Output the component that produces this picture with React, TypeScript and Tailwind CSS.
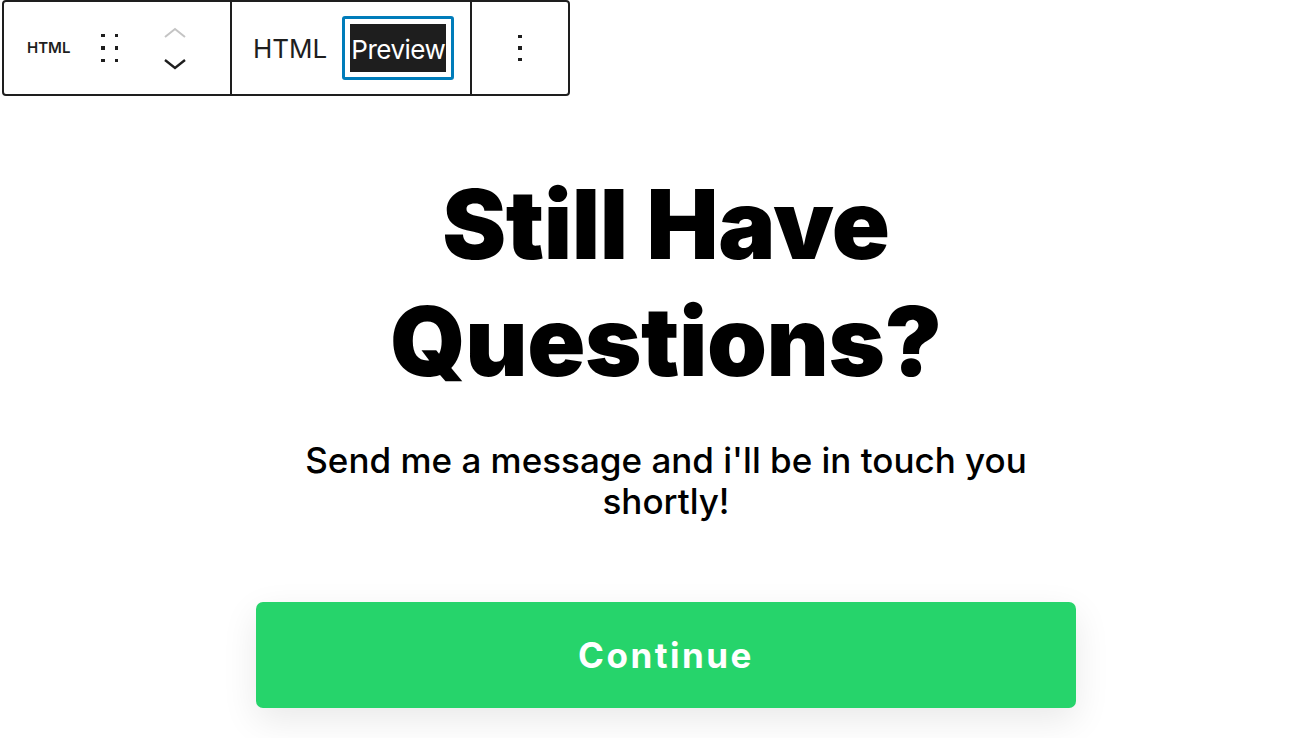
export default function App() {
  return (
    <div className="min-h-screen bg-white font-['Inter',sans-serif] text-black">
      <div className="pl-[2px]">
        <div className="flex h-[96px] w-[568px] rounded-[4px] border-2 border-[#1e1e1e] bg-white">
          <div className="flex w-[228px] items-center border-r-2 border-[#1e1e1e]">
            <span className="ml-[23px] text-[15px] font-semibold text-[#1e1e1e]">HTML</span>
            <div className="ml-[31px] grid grid-cols-2 gap-x-[10px] gap-y-[9px]">
              <span className="h-[3.5px] w-[3.5px] bg-[#1e1e1e]" />
              <span className="h-[3.5px] w-[3.5px] bg-[#1e1e1e]" />
              <span className="h-[3.5px] w-[3.5px] bg-[#1e1e1e]" />
              <span className="h-[3.5px] w-[3.5px] bg-[#1e1e1e]" />
              <span className="h-[3.5px] w-[3.5px] bg-[#1e1e1e]" />
              <span className="h-[3.5px] w-[3.5px] bg-[#1e1e1e]" />
            </div>
            <div className="ml-[45px] flex flex-col gap-[17px]">
              <svg width="24" height="14" viewBox="0 0 24 14" fill="none">
                <path d="M2 11 L12 3 L22 11" stroke="#c4c4c4" strokeWidth="2" />
              </svg>
              <svg width="24" height="14" viewBox="0 0 24 14" fill="none">
                <path d="M2 3 L12 11 L22 3" stroke="#1e1e1e" strokeWidth="2.4" />
              </svg>
            </div>
          </div>
          <div className="flex w-[240px] items-center border-r-2 border-[#1e1e1e]">
            <span className="ml-[21px] text-[26px] text-[#1e1e1e]">HTML</span>
            <div className="ml-[15px] rounded-[3px] border-[3px] border-[#007cba] p-[5px]">
              <div className="flex h-[48px] w-[96px] items-center overflow-hidden bg-[#1e1e1e]">
                <span className="ml-[1px] mt-[2px] whitespace-nowrap text-[26px] tracking-[-0.5px] text-white">Preview</span>
              </div>
            </div>
          </div>
          <div className="flex flex-1 items-center justify-center">
            <div className="flex flex-col gap-[8px]">
              <span className="h-[3.5px] w-[3.5px] bg-[#1e1e1e]" />
              <span className="h-[3.5px] w-[3.5px] bg-[#1e1e1e]" />
              <span className="h-[3.5px] w-[3.5px] bg-[#1e1e1e]" />
            </div>
          </div>
        </div>
      </div>

      <div className="ml-[256px] mt-[70px] flex w-[820px] flex-col items-center text-center">
        <h1 className="text-[96px] font-black leading-[117px] tracking-[-0.4px]">
          Still Have Questions?
        </h1>
        <p className="mt-[40px] text-[35px] font-medium leading-[41px]">
          Send me a message and i'll be in touch you shortly!
        </p>
        <button className="mt-[80px] h-[106px] w-[820px] rounded-[7px] bg-[#26d46b] text-[35px] font-bold tracking-[2.5px] text-white shadow-[0_12px_36px_rgba(0,0,0,0.09)]">
          Continue
        </button>
      </div>
    </div>
  );
}
